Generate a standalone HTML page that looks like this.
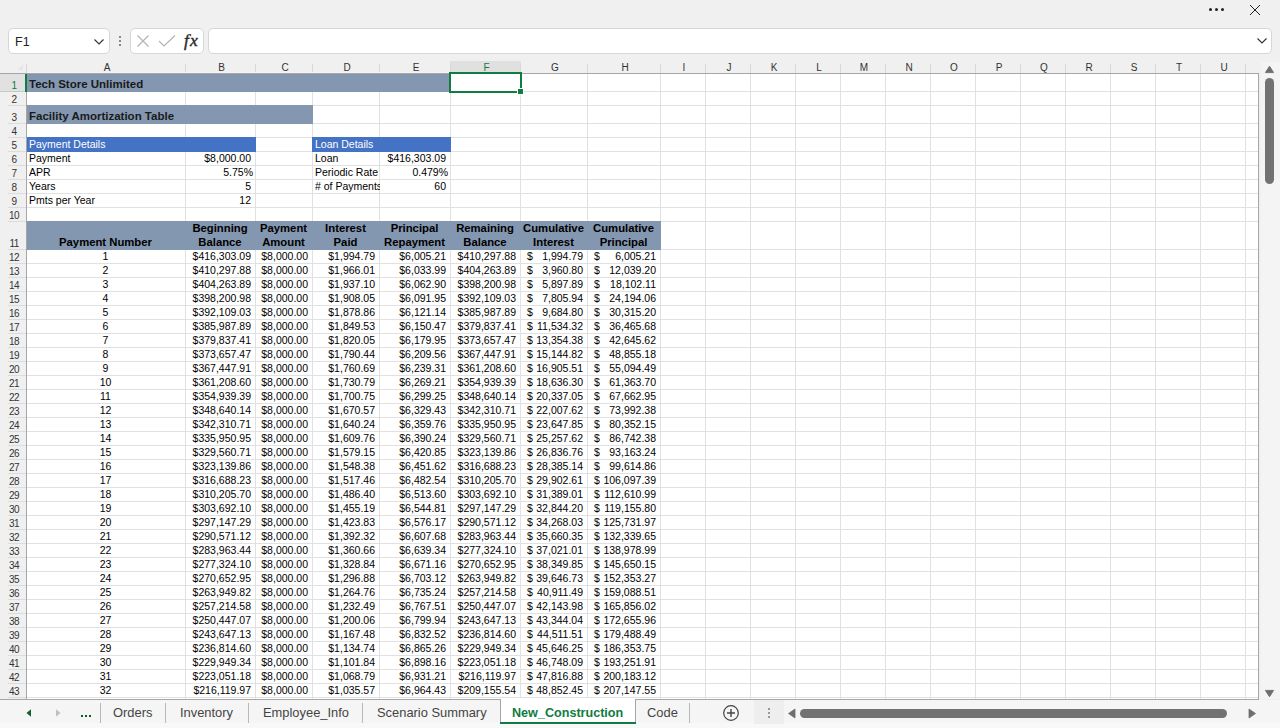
<!DOCTYPE html>
<html><head><meta charset="utf-8"><title>New_Construction</title>
<style>
html,body{margin:0;padding:0;}
body{width:1280px;height:728px;position:relative;overflow:hidden;background:#f0f0f0;font-family:'Liberation Sans', sans-serif;}
.a{position:absolute;}
.t{position:absolute;white-space:nowrap;font-size:10.5px;line-height:14px;color:#000;}
.r{text-align:right;}
.c{text-align:center;}
.b{font-weight:bold;}
.vl{position:absolute;width:1px;background:#e1e1e1;}
.hl{position:absolute;height:1px;background:#e1e1e1;}
</style></head><body>

<div class="a" style="left:1209px;top:8px;width:3px;height:3px;border-radius:50%;background:#222"></div>
<div class="a" style="left:1215px;top:8px;width:3px;height:3px;border-radius:50%;background:#222"></div>
<div class="a" style="left:1221px;top:8px;width:3px;height:3px;border-radius:50%;background:#222"></div>
<svg class="a" style="left:1248px;top:3px" width="14" height="14" viewBox="0 0 14 14"><path d="M2 2 L12 12 M12 2 L2 12" stroke="#222" stroke-width="1" fill="none"/></svg>
<div class="a" style="left:8px;top:28px;width:100px;height:24px;background:#fff;border:1px solid #d6d6d6;border-radius:5px"></div>
<div class="a" style="left:15px;top:34px;font-size:12.5px;line-height:16px;color:#222">F1</div>
<svg class="a" style="left:93px;top:38px" width="12" height="8" viewBox="0 0 12 8"><path d="M1.5 1.5 L6 6 L10.5 1.5" stroke="#333" stroke-width="1.15" fill="none"/></svg>
<div class="a" style="left:119px;top:36px;width:2px;height:2px;background:#8a8a8a"></div>
<div class="a" style="left:119px;top:40px;width:2px;height:2px;background:#8a8a8a"></div>
<div class="a" style="left:119px;top:44px;width:2px;height:2px;background:#8a8a8a"></div>
<div class="a" style="left:130px;top:28px;width:72px;height:24px;background:#fff;border:1px solid #d6d6d6;border-radius:5px"></div>
<svg class="a" style="left:136px;top:34px" width="14" height="14" viewBox="0 0 14 14"><path d="M1.5 1.5 L12.5 12.5 M12.5 1.5 L1.5 12.5" stroke="#b4b4b4" stroke-width="1.2" fill="none"/></svg>
<svg class="a" style="left:158px;top:34px" width="18" height="14" viewBox="0 0 18 14"><path d="M1 7 L6 12 L17 1.5" stroke="#b4b4b4" stroke-width="1.2" fill="none"/></svg>
<div class="a" style="left:184px;top:29.5px;font-family:'Liberation Serif',serif;font-style:italic;font-size:17.5px;line-height:20px;color:#2a2a2a;letter-spacing:1.2px;-webkit-text-stroke:0.4px #2a2a2a">fx</div>
<div class="a" style="left:208px;top:28px;width:1062px;height:24px;background:#fff;border:1px solid #d6d6d6;border-radius:5px"></div>
<svg class="a" style="left:1256px;top:37px" width="12" height="8" viewBox="0 0 12 8"><path d="M1.5 1.5 L6 6 L10.5 1.5" stroke="#333" stroke-width="1.15" fill="none"/></svg>
<div class="a" style="left:27px;top:74px;width:1231px;height:625px;background:#fff"></div>
<div class="a" style="left:450px;top:61px;width:71px;height:11px;background:#e0e0e0"></div>
<div class="a" style="left:0px;top:73px;width:26px;height:18px;background:#e1e1e1"></div>
<div class="vl" style="left:185px;top:73px;height:626px"></div>
<div class="vl" style="left:255px;top:73px;height:626px"></div>
<div class="vl" style="left:312px;top:73px;height:626px"></div>
<div class="vl" style="left:379px;top:73px;height:626px"></div>
<div class="vl" style="left:450px;top:73px;height:626px"></div>
<div class="vl" style="left:520px;top:73px;height:626px"></div>
<div class="vl" style="left:587px;top:73px;height:626px"></div>
<div class="vl" style="left:660px;top:73px;height:626px"></div>
<div class="vl" style="left:705px;top:73px;height:626px"></div>
<div class="vl" style="left:750px;top:73px;height:626px"></div>
<div class="vl" style="left:795px;top:73px;height:626px"></div>
<div class="vl" style="left:840px;top:73px;height:626px"></div>
<div class="vl" style="left:885px;top:73px;height:626px"></div>
<div class="vl" style="left:930px;top:73px;height:626px"></div>
<div class="vl" style="left:975px;top:73px;height:626px"></div>
<div class="vl" style="left:1020px;top:73px;height:626px"></div>
<div class="vl" style="left:1065px;top:73px;height:626px"></div>
<div class="vl" style="left:1110px;top:73px;height:626px"></div>
<div class="vl" style="left:1155px;top:73px;height:626px"></div>
<div class="vl" style="left:1200px;top:73px;height:626px"></div>
<div class="vl" style="left:1245px;top:73px;height:626px"></div>
<div class="hl" style="left:27px;top:91px;width:1231px"></div>
<div class="hl" style="left:27px;top:105px;width:1231px"></div>
<div class="hl" style="left:27px;top:123px;width:1231px"></div>
<div class="hl" style="left:27px;top:137px;width:1231px"></div>
<div class="hl" style="left:27px;top:151px;width:1231px"></div>
<div class="hl" style="left:27px;top:165px;width:1231px"></div>
<div class="hl" style="left:27px;top:179px;width:1231px"></div>
<div class="hl" style="left:27px;top:193px;width:1231px"></div>
<div class="hl" style="left:27px;top:207px;width:1231px"></div>
<div class="hl" style="left:27px;top:221px;width:1231px"></div>
<div class="hl" style="left:27px;top:249px;width:1231px"></div>
<div class="hl" style="left:27px;top:263px;width:1231px"></div>
<div class="hl" style="left:27px;top:277px;width:1231px"></div>
<div class="hl" style="left:27px;top:291px;width:1231px"></div>
<div class="hl" style="left:27px;top:305px;width:1231px"></div>
<div class="hl" style="left:27px;top:319px;width:1231px"></div>
<div class="hl" style="left:27px;top:333px;width:1231px"></div>
<div class="hl" style="left:27px;top:347px;width:1231px"></div>
<div class="hl" style="left:27px;top:361px;width:1231px"></div>
<div class="hl" style="left:27px;top:375px;width:1231px"></div>
<div class="hl" style="left:27px;top:389px;width:1231px"></div>
<div class="hl" style="left:27px;top:403px;width:1231px"></div>
<div class="hl" style="left:27px;top:417px;width:1231px"></div>
<div class="hl" style="left:27px;top:431px;width:1231px"></div>
<div class="hl" style="left:27px;top:445px;width:1231px"></div>
<div class="hl" style="left:27px;top:459px;width:1231px"></div>
<div class="hl" style="left:27px;top:473px;width:1231px"></div>
<div class="hl" style="left:27px;top:487px;width:1231px"></div>
<div class="hl" style="left:27px;top:501px;width:1231px"></div>
<div class="hl" style="left:27px;top:515px;width:1231px"></div>
<div class="hl" style="left:27px;top:529px;width:1231px"></div>
<div class="hl" style="left:27px;top:543px;width:1231px"></div>
<div class="hl" style="left:27px;top:557px;width:1231px"></div>
<div class="hl" style="left:27px;top:571px;width:1231px"></div>
<div class="hl" style="left:27px;top:585px;width:1231px"></div>
<div class="hl" style="left:27px;top:599px;width:1231px"></div>
<div class="hl" style="left:27px;top:613px;width:1231px"></div>
<div class="hl" style="left:27px;top:627px;width:1231px"></div>
<div class="hl" style="left:27px;top:641px;width:1231px"></div>
<div class="hl" style="left:27px;top:655px;width:1231px"></div>
<div class="hl" style="left:27px;top:669px;width:1231px"></div>
<div class="hl" style="left:27px;top:683px;width:1231px"></div>
<div class="hl" style="left:27px;top:697px;width:1231px"></div>
<div class="a" style="left:27px;top:73px;width:424px;height:19px;background:#8497b0"></div>
<div class="a" style="left:27px;top:105px;width:286px;height:19px;background:#8497b0"></div>
<div class="a" style="left:27px;top:137px;width:229px;height:15px;background:#4472c4"></div>
<div class="a" style="left:312px;top:137px;width:139px;height:15px;background:#4472c4"></div>
<div class="a" style="left:27px;top:221px;width:634px;height:29px;background:#8497b0"></div>
<div class="a" style="left:185px;top:64px;width:1px;height:9px;background:#d8d8d8"></div>
<div class="a" style="left:255px;top:64px;width:1px;height:9px;background:#d8d8d8"></div>
<div class="a" style="left:312px;top:64px;width:1px;height:9px;background:#d8d8d8"></div>
<div class="a" style="left:379px;top:64px;width:1px;height:9px;background:#d8d8d8"></div>
<div class="a" style="left:450px;top:64px;width:1px;height:9px;background:#d8d8d8"></div>
<div class="a" style="left:520px;top:64px;width:1px;height:9px;background:#d8d8d8"></div>
<div class="a" style="left:587px;top:64px;width:1px;height:9px;background:#d8d8d8"></div>
<div class="a" style="left:660px;top:64px;width:1px;height:9px;background:#d8d8d8"></div>
<div class="a" style="left:705px;top:64px;width:1px;height:9px;background:#d8d8d8"></div>
<div class="a" style="left:750px;top:64px;width:1px;height:9px;background:#d8d8d8"></div>
<div class="a" style="left:795px;top:64px;width:1px;height:9px;background:#d8d8d8"></div>
<div class="a" style="left:840px;top:64px;width:1px;height:9px;background:#d8d8d8"></div>
<div class="a" style="left:885px;top:64px;width:1px;height:9px;background:#d8d8d8"></div>
<div class="a" style="left:930px;top:64px;width:1px;height:9px;background:#d8d8d8"></div>
<div class="a" style="left:975px;top:64px;width:1px;height:9px;background:#d8d8d8"></div>
<div class="a" style="left:1020px;top:64px;width:1px;height:9px;background:#d8d8d8"></div>
<div class="a" style="left:1065px;top:64px;width:1px;height:9px;background:#d8d8d8"></div>
<div class="a" style="left:1110px;top:64px;width:1px;height:9px;background:#d8d8d8"></div>
<div class="a" style="left:1155px;top:64px;width:1px;height:9px;background:#d8d8d8"></div>
<div class="a" style="left:1200px;top:64px;width:1px;height:9px;background:#d8d8d8"></div>
<div class="a" style="left:1245px;top:64px;width:1px;height:9px;background:#d8d8d8"></div>
<div class="a" style="left:0px;top:73px;width:1258px;height:1px;background:#a6a6a6"></div>
<div class="a" style="left:27px;top:72px;width:423px;height:1px;background:#f6f6f6"></div>
<div class="a" style="left:26px;top:64px;width:1px;height:9px;background:#d8d8d8"></div>
<div class="a" style="left:26px;top:73px;width:1px;height:626px;background:#a6a6a6"></div>
<div class="a" style="left:1258px;top:73px;width:1px;height:627px;background:#a6a6a6"></div>
<div class="a" style="left:0px;top:699px;width:1259px;height:1px;background:#a6a6a6"></div>
<div class="t c" style="left:27.5px;width:159px;top:61px;font-size:10px;color:#333">A</div>
<div class="t c" style="left:186.5px;width:70px;top:61px;font-size:10px;color:#333">B</div>
<div class="t c" style="left:256.5px;width:57px;top:61px;font-size:10px;color:#333">C</div>
<div class="t c" style="left:313.5px;width:67px;top:61px;font-size:10px;color:#333">D</div>
<div class="t c" style="left:380.5px;width:71px;top:61px;font-size:10px;color:#333">E</div>
<div class="t c" style="left:451.5px;width:70px;top:61px;font-size:10px;color:#107c41">F</div>
<div class="t c" style="left:521.5px;width:67px;top:61px;font-size:10px;color:#333">G</div>
<div class="t c" style="left:588.5px;width:73px;top:61px;font-size:10px;color:#333">H</div>
<div class="t c" style="left:661.5px;width:45px;top:61px;font-size:10px;color:#333">I</div>
<div class="t c" style="left:706.5px;width:45px;top:61px;font-size:10px;color:#333">J</div>
<div class="t c" style="left:751.5px;width:45px;top:61px;font-size:10px;color:#333">K</div>
<div class="t c" style="left:796.5px;width:45px;top:61px;font-size:10px;color:#333">L</div>
<div class="t c" style="left:841.5px;width:45px;top:61px;font-size:10px;color:#333">M</div>
<div class="t c" style="left:886.5px;width:45px;top:61px;font-size:10px;color:#333">N</div>
<div class="t c" style="left:931.5px;width:45px;top:61px;font-size:10px;color:#333">O</div>
<div class="t c" style="left:976.5px;width:45px;top:61px;font-size:10px;color:#333">P</div>
<div class="t c" style="left:1021.5px;width:45px;top:61px;font-size:10px;color:#333">Q</div>
<div class="t c" style="left:1066.5px;width:45px;top:61px;font-size:10px;color:#333">R</div>
<div class="t c" style="left:1111.5px;width:45px;top:61px;font-size:10px;color:#333">S</div>
<div class="t c" style="left:1156.5px;width:45px;top:61px;font-size:10px;color:#333">T</div>
<div class="t c" style="left:1201.5px;width:45px;top:61px;font-size:10px;color:#333">U</div>
<div class="a" style="left:8px;top:91px;width:18px;height:1px;background:#dcdcdc"></div>
<div class="t c" style="left:0.5px;width:27px;top:79px;font-size:10px;letter-spacing:-0.6px;color:#107c41">1</div>
<div class="a" style="left:8px;top:105px;width:18px;height:1px;background:#dcdcdc"></div>
<div class="t c" style="left:0.5px;width:27px;top:93px;font-size:10px;letter-spacing:-0.6px;color:#333">2</div>
<div class="a" style="left:8px;top:123px;width:18px;height:1px;background:#dcdcdc"></div>
<div class="t c" style="left:0.5px;width:27px;top:111px;font-size:10px;letter-spacing:-0.6px;color:#333">3</div>
<div class="a" style="left:8px;top:137px;width:18px;height:1px;background:#dcdcdc"></div>
<div class="t c" style="left:0.5px;width:27px;top:125px;font-size:10px;letter-spacing:-0.6px;color:#333">4</div>
<div class="a" style="left:8px;top:151px;width:18px;height:1px;background:#dcdcdc"></div>
<div class="t c" style="left:0.5px;width:27px;top:139px;font-size:10px;letter-spacing:-0.6px;color:#333">5</div>
<div class="a" style="left:8px;top:165px;width:18px;height:1px;background:#dcdcdc"></div>
<div class="t c" style="left:0.5px;width:27px;top:153px;font-size:10px;letter-spacing:-0.6px;color:#333">6</div>
<div class="a" style="left:8px;top:179px;width:18px;height:1px;background:#dcdcdc"></div>
<div class="t c" style="left:0.5px;width:27px;top:167px;font-size:10px;letter-spacing:-0.6px;color:#333">7</div>
<div class="a" style="left:8px;top:193px;width:18px;height:1px;background:#dcdcdc"></div>
<div class="t c" style="left:0.5px;width:27px;top:181px;font-size:10px;letter-spacing:-0.6px;color:#333">8</div>
<div class="a" style="left:8px;top:207px;width:18px;height:1px;background:#dcdcdc"></div>
<div class="t c" style="left:0.5px;width:27px;top:195px;font-size:10px;letter-spacing:-0.6px;color:#333">9</div>
<div class="a" style="left:8px;top:221px;width:18px;height:1px;background:#dcdcdc"></div>
<div class="t c" style="left:0.5px;width:27px;top:209px;font-size:10px;letter-spacing:-0.6px;color:#333">10</div>
<div class="a" style="left:8px;top:249px;width:18px;height:1px;background:#dcdcdc"></div>
<div class="t c" style="left:0.5px;width:27px;top:237px;font-size:10px;letter-spacing:-0.6px;color:#333">11</div>
<div class="a" style="left:8px;top:263px;width:18px;height:1px;background:#dcdcdc"></div>
<div class="t c" style="left:0.5px;width:27px;top:251px;font-size:10px;letter-spacing:-0.6px;color:#333">12</div>
<div class="a" style="left:8px;top:277px;width:18px;height:1px;background:#dcdcdc"></div>
<div class="t c" style="left:0.5px;width:27px;top:265px;font-size:10px;letter-spacing:-0.6px;color:#333">13</div>
<div class="a" style="left:8px;top:291px;width:18px;height:1px;background:#dcdcdc"></div>
<div class="t c" style="left:0.5px;width:27px;top:279px;font-size:10px;letter-spacing:-0.6px;color:#333">14</div>
<div class="a" style="left:8px;top:305px;width:18px;height:1px;background:#dcdcdc"></div>
<div class="t c" style="left:0.5px;width:27px;top:293px;font-size:10px;letter-spacing:-0.6px;color:#333">15</div>
<div class="a" style="left:8px;top:319px;width:18px;height:1px;background:#dcdcdc"></div>
<div class="t c" style="left:0.5px;width:27px;top:307px;font-size:10px;letter-spacing:-0.6px;color:#333">16</div>
<div class="a" style="left:8px;top:333px;width:18px;height:1px;background:#dcdcdc"></div>
<div class="t c" style="left:0.5px;width:27px;top:321px;font-size:10px;letter-spacing:-0.6px;color:#333">17</div>
<div class="a" style="left:8px;top:347px;width:18px;height:1px;background:#dcdcdc"></div>
<div class="t c" style="left:0.5px;width:27px;top:335px;font-size:10px;letter-spacing:-0.6px;color:#333">18</div>
<div class="a" style="left:8px;top:361px;width:18px;height:1px;background:#dcdcdc"></div>
<div class="t c" style="left:0.5px;width:27px;top:349px;font-size:10px;letter-spacing:-0.6px;color:#333">19</div>
<div class="a" style="left:8px;top:375px;width:18px;height:1px;background:#dcdcdc"></div>
<div class="t c" style="left:0.5px;width:27px;top:363px;font-size:10px;letter-spacing:-0.6px;color:#333">20</div>
<div class="a" style="left:8px;top:389px;width:18px;height:1px;background:#dcdcdc"></div>
<div class="t c" style="left:0.5px;width:27px;top:377px;font-size:10px;letter-spacing:-0.6px;color:#333">21</div>
<div class="a" style="left:8px;top:403px;width:18px;height:1px;background:#dcdcdc"></div>
<div class="t c" style="left:0.5px;width:27px;top:391px;font-size:10px;letter-spacing:-0.6px;color:#333">22</div>
<div class="a" style="left:8px;top:417px;width:18px;height:1px;background:#dcdcdc"></div>
<div class="t c" style="left:0.5px;width:27px;top:405px;font-size:10px;letter-spacing:-0.6px;color:#333">23</div>
<div class="a" style="left:8px;top:431px;width:18px;height:1px;background:#dcdcdc"></div>
<div class="t c" style="left:0.5px;width:27px;top:419px;font-size:10px;letter-spacing:-0.6px;color:#333">24</div>
<div class="a" style="left:8px;top:445px;width:18px;height:1px;background:#dcdcdc"></div>
<div class="t c" style="left:0.5px;width:27px;top:433px;font-size:10px;letter-spacing:-0.6px;color:#333">25</div>
<div class="a" style="left:8px;top:459px;width:18px;height:1px;background:#dcdcdc"></div>
<div class="t c" style="left:0.5px;width:27px;top:447px;font-size:10px;letter-spacing:-0.6px;color:#333">26</div>
<div class="a" style="left:8px;top:473px;width:18px;height:1px;background:#dcdcdc"></div>
<div class="t c" style="left:0.5px;width:27px;top:461px;font-size:10px;letter-spacing:-0.6px;color:#333">27</div>
<div class="a" style="left:8px;top:487px;width:18px;height:1px;background:#dcdcdc"></div>
<div class="t c" style="left:0.5px;width:27px;top:475px;font-size:10px;letter-spacing:-0.6px;color:#333">28</div>
<div class="a" style="left:8px;top:501px;width:18px;height:1px;background:#dcdcdc"></div>
<div class="t c" style="left:0.5px;width:27px;top:489px;font-size:10px;letter-spacing:-0.6px;color:#333">29</div>
<div class="a" style="left:8px;top:515px;width:18px;height:1px;background:#dcdcdc"></div>
<div class="t c" style="left:0.5px;width:27px;top:503px;font-size:10px;letter-spacing:-0.6px;color:#333">30</div>
<div class="a" style="left:8px;top:529px;width:18px;height:1px;background:#dcdcdc"></div>
<div class="t c" style="left:0.5px;width:27px;top:517px;font-size:10px;letter-spacing:-0.6px;color:#333">31</div>
<div class="a" style="left:8px;top:543px;width:18px;height:1px;background:#dcdcdc"></div>
<div class="t c" style="left:0.5px;width:27px;top:531px;font-size:10px;letter-spacing:-0.6px;color:#333">32</div>
<div class="a" style="left:8px;top:557px;width:18px;height:1px;background:#dcdcdc"></div>
<div class="t c" style="left:0.5px;width:27px;top:545px;font-size:10px;letter-spacing:-0.6px;color:#333">33</div>
<div class="a" style="left:8px;top:571px;width:18px;height:1px;background:#dcdcdc"></div>
<div class="t c" style="left:0.5px;width:27px;top:559px;font-size:10px;letter-spacing:-0.6px;color:#333">34</div>
<div class="a" style="left:8px;top:585px;width:18px;height:1px;background:#dcdcdc"></div>
<div class="t c" style="left:0.5px;width:27px;top:573px;font-size:10px;letter-spacing:-0.6px;color:#333">35</div>
<div class="a" style="left:8px;top:599px;width:18px;height:1px;background:#dcdcdc"></div>
<div class="t c" style="left:0.5px;width:27px;top:587px;font-size:10px;letter-spacing:-0.6px;color:#333">36</div>
<div class="a" style="left:8px;top:613px;width:18px;height:1px;background:#dcdcdc"></div>
<div class="t c" style="left:0.5px;width:27px;top:601px;font-size:10px;letter-spacing:-0.6px;color:#333">37</div>
<div class="a" style="left:8px;top:627px;width:18px;height:1px;background:#dcdcdc"></div>
<div class="t c" style="left:0.5px;width:27px;top:615px;font-size:10px;letter-spacing:-0.6px;color:#333">38</div>
<div class="a" style="left:8px;top:641px;width:18px;height:1px;background:#dcdcdc"></div>
<div class="t c" style="left:0.5px;width:27px;top:629px;font-size:10px;letter-spacing:-0.6px;color:#333">39</div>
<div class="a" style="left:8px;top:655px;width:18px;height:1px;background:#dcdcdc"></div>
<div class="t c" style="left:0.5px;width:27px;top:643px;font-size:10px;letter-spacing:-0.6px;color:#333">40</div>
<div class="a" style="left:8px;top:669px;width:18px;height:1px;background:#dcdcdc"></div>
<div class="t c" style="left:0.5px;width:27px;top:657px;font-size:10px;letter-spacing:-0.6px;color:#333">41</div>
<div class="a" style="left:8px;top:683px;width:18px;height:1px;background:#dcdcdc"></div>
<div class="t c" style="left:0.5px;width:27px;top:671px;font-size:10px;letter-spacing:-0.6px;color:#333">42</div>
<div class="a" style="left:8px;top:697px;width:18px;height:1px;background:#dcdcdc"></div>
<div class="t c" style="left:0.5px;width:27px;top:685px;font-size:10px;letter-spacing:-0.6px;color:#333">43</div>
<div class="a" style="left:0px;top:91px;width:26px;height:1px;background:#c8c8c8"></div>
<div class="a" style="left:25px;top:74px;width:2px;height:18px;background:#107c41"></div>
<svg class="a" style="left:16px;top:63px" width="8" height="8" viewBox="0 0 8 8"><path d="M7 1 L7 7 L1 7 Z" fill="#e6e6e6"/></svg>
<div class="t b" style="top:77px;color:#1a1a1a;font-size:11.5px;left:29px;">Tech Store Unlimited</div>
<div class="t b" style="top:109px;color:#1a1a1a;font-size:11.5px;left:29px;">Facility Amortization Table</div>
<div class="t" style="top:137px;color:#fff;left:29px;">Payment Details</div>
<div class="t" style="top:137px;color:#fff;left:315px;">Loan Details</div>
<div class="t" style="top:151px;color:#000;left:29px;">Payment</div>
<div class="t" style="top:151px;color:#000;left:185px;width:66px;text-align:right;">$8,000.00</div>
<div class="t" style="top:165px;color:#000;left:29px;">APR</div>
<div class="t" style="top:165px;color:#000;left:185px;width:68px;text-align:right;">5.75%</div>
<div class="t" style="top:179px;color:#000;left:29px;">Years</div>
<div class="t" style="top:179px;color:#000;left:185px;width:66px;text-align:right;">5</div>
<div class="t" style="top:193px;color:#000;left:29px;">Pmts per Year</div>
<div class="t" style="top:193px;color:#000;left:185px;width:66px;text-align:right;">12</div>
<div class="t" style="top:151px;color:#000;left:315px;"><span style="display:inline-block;width:65px;overflow:hidden">Loan</span></div>
<div class="t" style="top:151px;color:#000;left:379px;width:67px;text-align:right;">$416,303.09</div>
<div class="t" style="top:165px;color:#000;left:315px;"><span style="display:inline-block;width:65px;overflow:hidden">Periodic Rate</span></div>
<div class="t" style="top:165px;color:#000;left:379px;width:69px;text-align:right;">0.479%</div>
<div class="t" style="top:179px;color:#000;left:315px;"><span style="display:inline-block;width:65px;overflow:hidden"># of Payments</span></div>
<div class="t" style="top:179px;color:#000;left:379px;width:67px;text-align:right;">60</div>
<div class="t c b" style="left:26px;width:159px;top:235px;font-size:11.3px">Payment Number</div>
<div class="t c b" style="left:185px;width:70px;top:221px;font-size:11.3px">Beginning</div>
<div class="t c b" style="left:185px;width:70px;top:235px;font-size:11.3px">Balance</div>
<div class="t c b" style="left:255px;width:57px;top:221px;font-size:11.3px">Payment</div>
<div class="t c b" style="left:255px;width:57px;top:235px;font-size:11.3px">Amount</div>
<div class="t c b" style="left:312px;width:67px;top:221px;font-size:11.3px">Interest</div>
<div class="t c b" style="left:312px;width:67px;top:235px;font-size:11.3px">Paid</div>
<div class="t c b" style="left:379px;width:71px;top:221px;font-size:11.3px">Principal</div>
<div class="t c b" style="left:379px;width:71px;top:235px;font-size:11.3px">Repayment</div>
<div class="t c b" style="left:450px;width:70px;top:221px;font-size:11.3px">Remaining</div>
<div class="t c b" style="left:450px;width:70px;top:235px;font-size:11.3px">Balance</div>
<div class="t c b" style="left:520px;width:67px;top:221px;font-size:11.3px">Cumulative</div>
<div class="t c b" style="left:520px;width:67px;top:235px;font-size:11.3px">Interest</div>
<div class="t c b" style="left:587px;width:73px;top:221px;font-size:11.3px">Cumulative</div>
<div class="t c b" style="left:587px;width:73px;top:235px;font-size:11.3px">Principal</div>
<div class="t" style="top:249px;color:#000;left:26px;width:159px;text-align:center;">1</div>
<div class="t" style="top:249px;color:#000;left:185px;width:66px;text-align:right;">$416,303.09</div>
<div class="t" style="top:249px;color:#000;left:255px;width:53px;text-align:right;">$8,000.00</div>
<div class="t" style="top:249px;color:#000;left:312px;width:63px;text-align:right;">$1,994.79</div>
<div class="t" style="top:249px;color:#000;left:379px;width:67px;text-align:right;">$6,005.21</div>
<div class="t" style="top:249px;color:#000;left:450px;width:66px;text-align:right;">$410,297.88</div>
<div class="t" style="top:249px;color:#000;left:527px;">$</div>
<div class="t" style="top:249px;color:#000;left:520px;width:63px;text-align:right;">1,994.79</div>
<div class="t" style="top:249px;color:#000;left:594px;">$</div>
<div class="t" style="top:249px;color:#000;left:587px;width:69px;text-align:right;">6,005.21</div>
<div class="t" style="top:263px;color:#000;left:26px;width:159px;text-align:center;">2</div>
<div class="t" style="top:263px;color:#000;left:185px;width:66px;text-align:right;">$410,297.88</div>
<div class="t" style="top:263px;color:#000;left:255px;width:53px;text-align:right;">$8,000.00</div>
<div class="t" style="top:263px;color:#000;left:312px;width:63px;text-align:right;">$1,966.01</div>
<div class="t" style="top:263px;color:#000;left:379px;width:67px;text-align:right;">$6,033.99</div>
<div class="t" style="top:263px;color:#000;left:450px;width:66px;text-align:right;">$404,263.89</div>
<div class="t" style="top:263px;color:#000;left:527px;">$</div>
<div class="t" style="top:263px;color:#000;left:520px;width:63px;text-align:right;">3,960.80</div>
<div class="t" style="top:263px;color:#000;left:594px;">$</div>
<div class="t" style="top:263px;color:#000;left:587px;width:69px;text-align:right;">12,039.20</div>
<div class="t" style="top:277px;color:#000;left:26px;width:159px;text-align:center;">3</div>
<div class="t" style="top:277px;color:#000;left:185px;width:66px;text-align:right;">$404,263.89</div>
<div class="t" style="top:277px;color:#000;left:255px;width:53px;text-align:right;">$8,000.00</div>
<div class="t" style="top:277px;color:#000;left:312px;width:63px;text-align:right;">$1,937.10</div>
<div class="t" style="top:277px;color:#000;left:379px;width:67px;text-align:right;">$6,062.90</div>
<div class="t" style="top:277px;color:#000;left:450px;width:66px;text-align:right;">$398,200.98</div>
<div class="t" style="top:277px;color:#000;left:527px;">$</div>
<div class="t" style="top:277px;color:#000;left:520px;width:63px;text-align:right;">5,897.89</div>
<div class="t" style="top:277px;color:#000;left:594px;">$</div>
<div class="t" style="top:277px;color:#000;left:587px;width:69px;text-align:right;">18,102.11</div>
<div class="t" style="top:291px;color:#000;left:26px;width:159px;text-align:center;">4</div>
<div class="t" style="top:291px;color:#000;left:185px;width:66px;text-align:right;">$398,200.98</div>
<div class="t" style="top:291px;color:#000;left:255px;width:53px;text-align:right;">$8,000.00</div>
<div class="t" style="top:291px;color:#000;left:312px;width:63px;text-align:right;">$1,908.05</div>
<div class="t" style="top:291px;color:#000;left:379px;width:67px;text-align:right;">$6,091.95</div>
<div class="t" style="top:291px;color:#000;left:450px;width:66px;text-align:right;">$392,109.03</div>
<div class="t" style="top:291px;color:#000;left:527px;">$</div>
<div class="t" style="top:291px;color:#000;left:520px;width:63px;text-align:right;">7,805.94</div>
<div class="t" style="top:291px;color:#000;left:594px;">$</div>
<div class="t" style="top:291px;color:#000;left:587px;width:69px;text-align:right;">24,194.06</div>
<div class="t" style="top:305px;color:#000;left:26px;width:159px;text-align:center;">5</div>
<div class="t" style="top:305px;color:#000;left:185px;width:66px;text-align:right;">$392,109.03</div>
<div class="t" style="top:305px;color:#000;left:255px;width:53px;text-align:right;">$8,000.00</div>
<div class="t" style="top:305px;color:#000;left:312px;width:63px;text-align:right;">$1,878.86</div>
<div class="t" style="top:305px;color:#000;left:379px;width:67px;text-align:right;">$6,121.14</div>
<div class="t" style="top:305px;color:#000;left:450px;width:66px;text-align:right;">$385,987.89</div>
<div class="t" style="top:305px;color:#000;left:527px;">$</div>
<div class="t" style="top:305px;color:#000;left:520px;width:63px;text-align:right;">9,684.80</div>
<div class="t" style="top:305px;color:#000;left:594px;">$</div>
<div class="t" style="top:305px;color:#000;left:587px;width:69px;text-align:right;">30,315.20</div>
<div class="t" style="top:319px;color:#000;left:26px;width:159px;text-align:center;">6</div>
<div class="t" style="top:319px;color:#000;left:185px;width:66px;text-align:right;">$385,987.89</div>
<div class="t" style="top:319px;color:#000;left:255px;width:53px;text-align:right;">$8,000.00</div>
<div class="t" style="top:319px;color:#000;left:312px;width:63px;text-align:right;">$1,849.53</div>
<div class="t" style="top:319px;color:#000;left:379px;width:67px;text-align:right;">$6,150.47</div>
<div class="t" style="top:319px;color:#000;left:450px;width:66px;text-align:right;">$379,837.41</div>
<div class="t" style="top:319px;color:#000;left:527px;">$</div>
<div class="t" style="top:319px;color:#000;left:520px;width:63px;text-align:right;">11,534.32</div>
<div class="t" style="top:319px;color:#000;left:594px;">$</div>
<div class="t" style="top:319px;color:#000;left:587px;width:69px;text-align:right;">36,465.68</div>
<div class="t" style="top:333px;color:#000;left:26px;width:159px;text-align:center;">7</div>
<div class="t" style="top:333px;color:#000;left:185px;width:66px;text-align:right;">$379,837.41</div>
<div class="t" style="top:333px;color:#000;left:255px;width:53px;text-align:right;">$8,000.00</div>
<div class="t" style="top:333px;color:#000;left:312px;width:63px;text-align:right;">$1,820.05</div>
<div class="t" style="top:333px;color:#000;left:379px;width:67px;text-align:right;">$6,179.95</div>
<div class="t" style="top:333px;color:#000;left:450px;width:66px;text-align:right;">$373,657.47</div>
<div class="t" style="top:333px;color:#000;left:527px;">$</div>
<div class="t" style="top:333px;color:#000;left:520px;width:63px;text-align:right;">13,354.38</div>
<div class="t" style="top:333px;color:#000;left:594px;">$</div>
<div class="t" style="top:333px;color:#000;left:587px;width:69px;text-align:right;">42,645.62</div>
<div class="t" style="top:347px;color:#000;left:26px;width:159px;text-align:center;">8</div>
<div class="t" style="top:347px;color:#000;left:185px;width:66px;text-align:right;">$373,657.47</div>
<div class="t" style="top:347px;color:#000;left:255px;width:53px;text-align:right;">$8,000.00</div>
<div class="t" style="top:347px;color:#000;left:312px;width:63px;text-align:right;">$1,790.44</div>
<div class="t" style="top:347px;color:#000;left:379px;width:67px;text-align:right;">$6,209.56</div>
<div class="t" style="top:347px;color:#000;left:450px;width:66px;text-align:right;">$367,447.91</div>
<div class="t" style="top:347px;color:#000;left:527px;">$</div>
<div class="t" style="top:347px;color:#000;left:520px;width:63px;text-align:right;">15,144.82</div>
<div class="t" style="top:347px;color:#000;left:594px;">$</div>
<div class="t" style="top:347px;color:#000;left:587px;width:69px;text-align:right;">48,855.18</div>
<div class="t" style="top:361px;color:#000;left:26px;width:159px;text-align:center;">9</div>
<div class="t" style="top:361px;color:#000;left:185px;width:66px;text-align:right;">$367,447.91</div>
<div class="t" style="top:361px;color:#000;left:255px;width:53px;text-align:right;">$8,000.00</div>
<div class="t" style="top:361px;color:#000;left:312px;width:63px;text-align:right;">$1,760.69</div>
<div class="t" style="top:361px;color:#000;left:379px;width:67px;text-align:right;">$6,239.31</div>
<div class="t" style="top:361px;color:#000;left:450px;width:66px;text-align:right;">$361,208.60</div>
<div class="t" style="top:361px;color:#000;left:527px;">$</div>
<div class="t" style="top:361px;color:#000;left:520px;width:63px;text-align:right;">16,905.51</div>
<div class="t" style="top:361px;color:#000;left:594px;">$</div>
<div class="t" style="top:361px;color:#000;left:587px;width:69px;text-align:right;">55,094.49</div>
<div class="t" style="top:375px;color:#000;left:26px;width:159px;text-align:center;">10</div>
<div class="t" style="top:375px;color:#000;left:185px;width:66px;text-align:right;">$361,208.60</div>
<div class="t" style="top:375px;color:#000;left:255px;width:53px;text-align:right;">$8,000.00</div>
<div class="t" style="top:375px;color:#000;left:312px;width:63px;text-align:right;">$1,730.79</div>
<div class="t" style="top:375px;color:#000;left:379px;width:67px;text-align:right;">$6,269.21</div>
<div class="t" style="top:375px;color:#000;left:450px;width:66px;text-align:right;">$354,939.39</div>
<div class="t" style="top:375px;color:#000;left:527px;">$</div>
<div class="t" style="top:375px;color:#000;left:520px;width:63px;text-align:right;">18,636.30</div>
<div class="t" style="top:375px;color:#000;left:594px;">$</div>
<div class="t" style="top:375px;color:#000;left:587px;width:69px;text-align:right;">61,363.70</div>
<div class="t" style="top:389px;color:#000;left:26px;width:159px;text-align:center;">11</div>
<div class="t" style="top:389px;color:#000;left:185px;width:66px;text-align:right;">$354,939.39</div>
<div class="t" style="top:389px;color:#000;left:255px;width:53px;text-align:right;">$8,000.00</div>
<div class="t" style="top:389px;color:#000;left:312px;width:63px;text-align:right;">$1,700.75</div>
<div class="t" style="top:389px;color:#000;left:379px;width:67px;text-align:right;">$6,299.25</div>
<div class="t" style="top:389px;color:#000;left:450px;width:66px;text-align:right;">$348,640.14</div>
<div class="t" style="top:389px;color:#000;left:527px;">$</div>
<div class="t" style="top:389px;color:#000;left:520px;width:63px;text-align:right;">20,337.05</div>
<div class="t" style="top:389px;color:#000;left:594px;">$</div>
<div class="t" style="top:389px;color:#000;left:587px;width:69px;text-align:right;">67,662.95</div>
<div class="t" style="top:403px;color:#000;left:26px;width:159px;text-align:center;">12</div>
<div class="t" style="top:403px;color:#000;left:185px;width:66px;text-align:right;">$348,640.14</div>
<div class="t" style="top:403px;color:#000;left:255px;width:53px;text-align:right;">$8,000.00</div>
<div class="t" style="top:403px;color:#000;left:312px;width:63px;text-align:right;">$1,670.57</div>
<div class="t" style="top:403px;color:#000;left:379px;width:67px;text-align:right;">$6,329.43</div>
<div class="t" style="top:403px;color:#000;left:450px;width:66px;text-align:right;">$342,310.71</div>
<div class="t" style="top:403px;color:#000;left:527px;">$</div>
<div class="t" style="top:403px;color:#000;left:520px;width:63px;text-align:right;">22,007.62</div>
<div class="t" style="top:403px;color:#000;left:594px;">$</div>
<div class="t" style="top:403px;color:#000;left:587px;width:69px;text-align:right;">73,992.38</div>
<div class="t" style="top:417px;color:#000;left:26px;width:159px;text-align:center;">13</div>
<div class="t" style="top:417px;color:#000;left:185px;width:66px;text-align:right;">$342,310.71</div>
<div class="t" style="top:417px;color:#000;left:255px;width:53px;text-align:right;">$8,000.00</div>
<div class="t" style="top:417px;color:#000;left:312px;width:63px;text-align:right;">$1,640.24</div>
<div class="t" style="top:417px;color:#000;left:379px;width:67px;text-align:right;">$6,359.76</div>
<div class="t" style="top:417px;color:#000;left:450px;width:66px;text-align:right;">$335,950.95</div>
<div class="t" style="top:417px;color:#000;left:527px;">$</div>
<div class="t" style="top:417px;color:#000;left:520px;width:63px;text-align:right;">23,647.85</div>
<div class="t" style="top:417px;color:#000;left:594px;">$</div>
<div class="t" style="top:417px;color:#000;left:587px;width:69px;text-align:right;">80,352.15</div>
<div class="t" style="top:431px;color:#000;left:26px;width:159px;text-align:center;">14</div>
<div class="t" style="top:431px;color:#000;left:185px;width:66px;text-align:right;">$335,950.95</div>
<div class="t" style="top:431px;color:#000;left:255px;width:53px;text-align:right;">$8,000.00</div>
<div class="t" style="top:431px;color:#000;left:312px;width:63px;text-align:right;">$1,609.76</div>
<div class="t" style="top:431px;color:#000;left:379px;width:67px;text-align:right;">$6,390.24</div>
<div class="t" style="top:431px;color:#000;left:450px;width:66px;text-align:right;">$329,560.71</div>
<div class="t" style="top:431px;color:#000;left:527px;">$</div>
<div class="t" style="top:431px;color:#000;left:520px;width:63px;text-align:right;">25,257.62</div>
<div class="t" style="top:431px;color:#000;left:594px;">$</div>
<div class="t" style="top:431px;color:#000;left:587px;width:69px;text-align:right;">86,742.38</div>
<div class="t" style="top:445px;color:#000;left:26px;width:159px;text-align:center;">15</div>
<div class="t" style="top:445px;color:#000;left:185px;width:66px;text-align:right;">$329,560.71</div>
<div class="t" style="top:445px;color:#000;left:255px;width:53px;text-align:right;">$8,000.00</div>
<div class="t" style="top:445px;color:#000;left:312px;width:63px;text-align:right;">$1,579.15</div>
<div class="t" style="top:445px;color:#000;left:379px;width:67px;text-align:right;">$6,420.85</div>
<div class="t" style="top:445px;color:#000;left:450px;width:66px;text-align:right;">$323,139.86</div>
<div class="t" style="top:445px;color:#000;left:527px;">$</div>
<div class="t" style="top:445px;color:#000;left:520px;width:63px;text-align:right;">26,836.76</div>
<div class="t" style="top:445px;color:#000;left:594px;">$</div>
<div class="t" style="top:445px;color:#000;left:587px;width:69px;text-align:right;">93,163.24</div>
<div class="t" style="top:459px;color:#000;left:26px;width:159px;text-align:center;">16</div>
<div class="t" style="top:459px;color:#000;left:185px;width:66px;text-align:right;">$323,139.86</div>
<div class="t" style="top:459px;color:#000;left:255px;width:53px;text-align:right;">$8,000.00</div>
<div class="t" style="top:459px;color:#000;left:312px;width:63px;text-align:right;">$1,548.38</div>
<div class="t" style="top:459px;color:#000;left:379px;width:67px;text-align:right;">$6,451.62</div>
<div class="t" style="top:459px;color:#000;left:450px;width:66px;text-align:right;">$316,688.23</div>
<div class="t" style="top:459px;color:#000;left:527px;">$</div>
<div class="t" style="top:459px;color:#000;left:520px;width:63px;text-align:right;">28,385.14</div>
<div class="t" style="top:459px;color:#000;left:594px;">$</div>
<div class="t" style="top:459px;color:#000;left:587px;width:69px;text-align:right;">99,614.86</div>
<div class="t" style="top:473px;color:#000;left:26px;width:159px;text-align:center;">17</div>
<div class="t" style="top:473px;color:#000;left:185px;width:66px;text-align:right;">$316,688.23</div>
<div class="t" style="top:473px;color:#000;left:255px;width:53px;text-align:right;">$8,000.00</div>
<div class="t" style="top:473px;color:#000;left:312px;width:63px;text-align:right;">$1,517.46</div>
<div class="t" style="top:473px;color:#000;left:379px;width:67px;text-align:right;">$6,482.54</div>
<div class="t" style="top:473px;color:#000;left:450px;width:66px;text-align:right;">$310,205.70</div>
<div class="t" style="top:473px;color:#000;left:527px;">$</div>
<div class="t" style="top:473px;color:#000;left:520px;width:63px;text-align:right;">29,902.61</div>
<div class="t" style="top:473px;color:#000;left:594px;">$</div>
<div class="t" style="top:473px;color:#000;left:587px;width:69px;text-align:right;">106,097.39</div>
<div class="t" style="top:487px;color:#000;left:26px;width:159px;text-align:center;">18</div>
<div class="t" style="top:487px;color:#000;left:185px;width:66px;text-align:right;">$310,205.70</div>
<div class="t" style="top:487px;color:#000;left:255px;width:53px;text-align:right;">$8,000.00</div>
<div class="t" style="top:487px;color:#000;left:312px;width:63px;text-align:right;">$1,486.40</div>
<div class="t" style="top:487px;color:#000;left:379px;width:67px;text-align:right;">$6,513.60</div>
<div class="t" style="top:487px;color:#000;left:450px;width:66px;text-align:right;">$303,692.10</div>
<div class="t" style="top:487px;color:#000;left:527px;">$</div>
<div class="t" style="top:487px;color:#000;left:520px;width:63px;text-align:right;">31,389.01</div>
<div class="t" style="top:487px;color:#000;left:594px;">$</div>
<div class="t" style="top:487px;color:#000;left:587px;width:69px;text-align:right;">112,610.99</div>
<div class="t" style="top:501px;color:#000;left:26px;width:159px;text-align:center;">19</div>
<div class="t" style="top:501px;color:#000;left:185px;width:66px;text-align:right;">$303,692.10</div>
<div class="t" style="top:501px;color:#000;left:255px;width:53px;text-align:right;">$8,000.00</div>
<div class="t" style="top:501px;color:#000;left:312px;width:63px;text-align:right;">$1,455.19</div>
<div class="t" style="top:501px;color:#000;left:379px;width:67px;text-align:right;">$6,544.81</div>
<div class="t" style="top:501px;color:#000;left:450px;width:66px;text-align:right;">$297,147.29</div>
<div class="t" style="top:501px;color:#000;left:527px;">$</div>
<div class="t" style="top:501px;color:#000;left:520px;width:63px;text-align:right;">32,844.20</div>
<div class="t" style="top:501px;color:#000;left:594px;">$</div>
<div class="t" style="top:501px;color:#000;left:587px;width:69px;text-align:right;">119,155.80</div>
<div class="t" style="top:515px;color:#000;left:26px;width:159px;text-align:center;">20</div>
<div class="t" style="top:515px;color:#000;left:185px;width:66px;text-align:right;">$297,147.29</div>
<div class="t" style="top:515px;color:#000;left:255px;width:53px;text-align:right;">$8,000.00</div>
<div class="t" style="top:515px;color:#000;left:312px;width:63px;text-align:right;">$1,423.83</div>
<div class="t" style="top:515px;color:#000;left:379px;width:67px;text-align:right;">$6,576.17</div>
<div class="t" style="top:515px;color:#000;left:450px;width:66px;text-align:right;">$290,571.12</div>
<div class="t" style="top:515px;color:#000;left:527px;">$</div>
<div class="t" style="top:515px;color:#000;left:520px;width:63px;text-align:right;">34,268.03</div>
<div class="t" style="top:515px;color:#000;left:594px;">$</div>
<div class="t" style="top:515px;color:#000;left:587px;width:69px;text-align:right;">125,731.97</div>
<div class="t" style="top:529px;color:#000;left:26px;width:159px;text-align:center;">21</div>
<div class="t" style="top:529px;color:#000;left:185px;width:66px;text-align:right;">$290,571.12</div>
<div class="t" style="top:529px;color:#000;left:255px;width:53px;text-align:right;">$8,000.00</div>
<div class="t" style="top:529px;color:#000;left:312px;width:63px;text-align:right;">$1,392.32</div>
<div class="t" style="top:529px;color:#000;left:379px;width:67px;text-align:right;">$6,607.68</div>
<div class="t" style="top:529px;color:#000;left:450px;width:66px;text-align:right;">$283,963.44</div>
<div class="t" style="top:529px;color:#000;left:527px;">$</div>
<div class="t" style="top:529px;color:#000;left:520px;width:63px;text-align:right;">35,660.35</div>
<div class="t" style="top:529px;color:#000;left:594px;">$</div>
<div class="t" style="top:529px;color:#000;left:587px;width:69px;text-align:right;">132,339.65</div>
<div class="t" style="top:543px;color:#000;left:26px;width:159px;text-align:center;">22</div>
<div class="t" style="top:543px;color:#000;left:185px;width:66px;text-align:right;">$283,963.44</div>
<div class="t" style="top:543px;color:#000;left:255px;width:53px;text-align:right;">$8,000.00</div>
<div class="t" style="top:543px;color:#000;left:312px;width:63px;text-align:right;">$1,360.66</div>
<div class="t" style="top:543px;color:#000;left:379px;width:67px;text-align:right;">$6,639.34</div>
<div class="t" style="top:543px;color:#000;left:450px;width:66px;text-align:right;">$277,324.10</div>
<div class="t" style="top:543px;color:#000;left:527px;">$</div>
<div class="t" style="top:543px;color:#000;left:520px;width:63px;text-align:right;">37,021.01</div>
<div class="t" style="top:543px;color:#000;left:594px;">$</div>
<div class="t" style="top:543px;color:#000;left:587px;width:69px;text-align:right;">138,978.99</div>
<div class="t" style="top:557px;color:#000;left:26px;width:159px;text-align:center;">23</div>
<div class="t" style="top:557px;color:#000;left:185px;width:66px;text-align:right;">$277,324.10</div>
<div class="t" style="top:557px;color:#000;left:255px;width:53px;text-align:right;">$8,000.00</div>
<div class="t" style="top:557px;color:#000;left:312px;width:63px;text-align:right;">$1,328.84</div>
<div class="t" style="top:557px;color:#000;left:379px;width:67px;text-align:right;">$6,671.16</div>
<div class="t" style="top:557px;color:#000;left:450px;width:66px;text-align:right;">$270,652.95</div>
<div class="t" style="top:557px;color:#000;left:527px;">$</div>
<div class="t" style="top:557px;color:#000;left:520px;width:63px;text-align:right;">38,349.85</div>
<div class="t" style="top:557px;color:#000;left:594px;">$</div>
<div class="t" style="top:557px;color:#000;left:587px;width:69px;text-align:right;">145,650.15</div>
<div class="t" style="top:571px;color:#000;left:26px;width:159px;text-align:center;">24</div>
<div class="t" style="top:571px;color:#000;left:185px;width:66px;text-align:right;">$270,652.95</div>
<div class="t" style="top:571px;color:#000;left:255px;width:53px;text-align:right;">$8,000.00</div>
<div class="t" style="top:571px;color:#000;left:312px;width:63px;text-align:right;">$1,296.88</div>
<div class="t" style="top:571px;color:#000;left:379px;width:67px;text-align:right;">$6,703.12</div>
<div class="t" style="top:571px;color:#000;left:450px;width:66px;text-align:right;">$263,949.82</div>
<div class="t" style="top:571px;color:#000;left:527px;">$</div>
<div class="t" style="top:571px;color:#000;left:520px;width:63px;text-align:right;">39,646.73</div>
<div class="t" style="top:571px;color:#000;left:594px;">$</div>
<div class="t" style="top:571px;color:#000;left:587px;width:69px;text-align:right;">152,353.27</div>
<div class="t" style="top:585px;color:#000;left:26px;width:159px;text-align:center;">25</div>
<div class="t" style="top:585px;color:#000;left:185px;width:66px;text-align:right;">$263,949.82</div>
<div class="t" style="top:585px;color:#000;left:255px;width:53px;text-align:right;">$8,000.00</div>
<div class="t" style="top:585px;color:#000;left:312px;width:63px;text-align:right;">$1,264.76</div>
<div class="t" style="top:585px;color:#000;left:379px;width:67px;text-align:right;">$6,735.24</div>
<div class="t" style="top:585px;color:#000;left:450px;width:66px;text-align:right;">$257,214.58</div>
<div class="t" style="top:585px;color:#000;left:527px;">$</div>
<div class="t" style="top:585px;color:#000;left:520px;width:63px;text-align:right;">40,911.49</div>
<div class="t" style="top:585px;color:#000;left:594px;">$</div>
<div class="t" style="top:585px;color:#000;left:587px;width:69px;text-align:right;">159,088.51</div>
<div class="t" style="top:599px;color:#000;left:26px;width:159px;text-align:center;">26</div>
<div class="t" style="top:599px;color:#000;left:185px;width:66px;text-align:right;">$257,214.58</div>
<div class="t" style="top:599px;color:#000;left:255px;width:53px;text-align:right;">$8,000.00</div>
<div class="t" style="top:599px;color:#000;left:312px;width:63px;text-align:right;">$1,232.49</div>
<div class="t" style="top:599px;color:#000;left:379px;width:67px;text-align:right;">$6,767.51</div>
<div class="t" style="top:599px;color:#000;left:450px;width:66px;text-align:right;">$250,447.07</div>
<div class="t" style="top:599px;color:#000;left:527px;">$</div>
<div class="t" style="top:599px;color:#000;left:520px;width:63px;text-align:right;">42,143.98</div>
<div class="t" style="top:599px;color:#000;left:594px;">$</div>
<div class="t" style="top:599px;color:#000;left:587px;width:69px;text-align:right;">165,856.02</div>
<div class="t" style="top:613px;color:#000;left:26px;width:159px;text-align:center;">27</div>
<div class="t" style="top:613px;color:#000;left:185px;width:66px;text-align:right;">$250,447.07</div>
<div class="t" style="top:613px;color:#000;left:255px;width:53px;text-align:right;">$8,000.00</div>
<div class="t" style="top:613px;color:#000;left:312px;width:63px;text-align:right;">$1,200.06</div>
<div class="t" style="top:613px;color:#000;left:379px;width:67px;text-align:right;">$6,799.94</div>
<div class="t" style="top:613px;color:#000;left:450px;width:66px;text-align:right;">$243,647.13</div>
<div class="t" style="top:613px;color:#000;left:527px;">$</div>
<div class="t" style="top:613px;color:#000;left:520px;width:63px;text-align:right;">43,344.04</div>
<div class="t" style="top:613px;color:#000;left:594px;">$</div>
<div class="t" style="top:613px;color:#000;left:587px;width:69px;text-align:right;">172,655.96</div>
<div class="t" style="top:627px;color:#000;left:26px;width:159px;text-align:center;">28</div>
<div class="t" style="top:627px;color:#000;left:185px;width:66px;text-align:right;">$243,647.13</div>
<div class="t" style="top:627px;color:#000;left:255px;width:53px;text-align:right;">$8,000.00</div>
<div class="t" style="top:627px;color:#000;left:312px;width:63px;text-align:right;">$1,167.48</div>
<div class="t" style="top:627px;color:#000;left:379px;width:67px;text-align:right;">$6,832.52</div>
<div class="t" style="top:627px;color:#000;left:450px;width:66px;text-align:right;">$236,814.60</div>
<div class="t" style="top:627px;color:#000;left:527px;">$</div>
<div class="t" style="top:627px;color:#000;left:520px;width:63px;text-align:right;">44,511.51</div>
<div class="t" style="top:627px;color:#000;left:594px;">$</div>
<div class="t" style="top:627px;color:#000;left:587px;width:69px;text-align:right;">179,488.49</div>
<div class="t" style="top:641px;color:#000;left:26px;width:159px;text-align:center;">29</div>
<div class="t" style="top:641px;color:#000;left:185px;width:66px;text-align:right;">$236,814.60</div>
<div class="t" style="top:641px;color:#000;left:255px;width:53px;text-align:right;">$8,000.00</div>
<div class="t" style="top:641px;color:#000;left:312px;width:63px;text-align:right;">$1,134.74</div>
<div class="t" style="top:641px;color:#000;left:379px;width:67px;text-align:right;">$6,865.26</div>
<div class="t" style="top:641px;color:#000;left:450px;width:66px;text-align:right;">$229,949.34</div>
<div class="t" style="top:641px;color:#000;left:527px;">$</div>
<div class="t" style="top:641px;color:#000;left:520px;width:63px;text-align:right;">45,646.25</div>
<div class="t" style="top:641px;color:#000;left:594px;">$</div>
<div class="t" style="top:641px;color:#000;left:587px;width:69px;text-align:right;">186,353.75</div>
<div class="t" style="top:655px;color:#000;left:26px;width:159px;text-align:center;">30</div>
<div class="t" style="top:655px;color:#000;left:185px;width:66px;text-align:right;">$229,949.34</div>
<div class="t" style="top:655px;color:#000;left:255px;width:53px;text-align:right;">$8,000.00</div>
<div class="t" style="top:655px;color:#000;left:312px;width:63px;text-align:right;">$1,101.84</div>
<div class="t" style="top:655px;color:#000;left:379px;width:67px;text-align:right;">$6,898.16</div>
<div class="t" style="top:655px;color:#000;left:450px;width:66px;text-align:right;">$223,051.18</div>
<div class="t" style="top:655px;color:#000;left:527px;">$</div>
<div class="t" style="top:655px;color:#000;left:520px;width:63px;text-align:right;">46,748.09</div>
<div class="t" style="top:655px;color:#000;left:594px;">$</div>
<div class="t" style="top:655px;color:#000;left:587px;width:69px;text-align:right;">193,251.91</div>
<div class="t" style="top:669px;color:#000;left:26px;width:159px;text-align:center;">31</div>
<div class="t" style="top:669px;color:#000;left:185px;width:66px;text-align:right;">$223,051.18</div>
<div class="t" style="top:669px;color:#000;left:255px;width:53px;text-align:right;">$8,000.00</div>
<div class="t" style="top:669px;color:#000;left:312px;width:63px;text-align:right;">$1,068.79</div>
<div class="t" style="top:669px;color:#000;left:379px;width:67px;text-align:right;">$6,931.21</div>
<div class="t" style="top:669px;color:#000;left:450px;width:66px;text-align:right;">$216,119.97</div>
<div class="t" style="top:669px;color:#000;left:527px;">$</div>
<div class="t" style="top:669px;color:#000;left:520px;width:63px;text-align:right;">47,816.88</div>
<div class="t" style="top:669px;color:#000;left:594px;">$</div>
<div class="t" style="top:669px;color:#000;left:587px;width:69px;text-align:right;">200,183.12</div>
<div class="t" style="top:683px;color:#000;left:26px;width:159px;text-align:center;">32</div>
<div class="t" style="top:683px;color:#000;left:185px;width:66px;text-align:right;">$216,119.97</div>
<div class="t" style="top:683px;color:#000;left:255px;width:53px;text-align:right;">$8,000.00</div>
<div class="t" style="top:683px;color:#000;left:312px;width:63px;text-align:right;">$1,035.57</div>
<div class="t" style="top:683px;color:#000;left:379px;width:67px;text-align:right;">$6,964.43</div>
<div class="t" style="top:683px;color:#000;left:450px;width:66px;text-align:right;">$209,155.54</div>
<div class="t" style="top:683px;color:#000;left:527px;">$</div>
<div class="t" style="top:683px;color:#000;left:520px;width:63px;text-align:right;">48,852.45</div>
<div class="t" style="top:683px;color:#000;left:594px;">$</div>
<div class="t" style="top:683px;color:#000;left:587px;width:69px;text-align:right;">207,147.55</div>
<div class="a" style="left:449px;top:72px;width:69px;height:17px;border:2px solid #107c41"></div>
<div class="a" style="left:517px;top:88px;width:5px;height:5px;background:#107c41;border:1px solid #fff"></div>
<div class="a" style="left:1261px;top:62px;width:19px;height:637px;background:#f4f4f4"></div>
<svg class="a" style="left:1264px;top:65px" width="11" height="9" viewBox="0 0 11 9"><path d="M5.5 1.2 L9.6 7.6 L1.4 7.6 Z" fill="#6e6e6e" stroke="#6e6e6e" stroke-width="0.9" stroke-linejoin="round"/></svg>
<div class="a" style="left:1265px;top:78px;width:9px;height:106px;border-radius:5px;background:#727272"></div>
<svg class="a" style="left:1264px;top:689px" width="11" height="9" viewBox="0 0 11 9"><path d="M1.4 1.4 L9.6 1.4 L5.5 7.8 Z" fill="#6e6e6e" stroke="#6e6e6e" stroke-width="0.9" stroke-linejoin="round"/></svg>
<div class="a" style="left:0px;top:700px;width:1280px;height:28px;background:#f5f5f5"></div>
<div class="a" style="left:0px;top:723px;width:1280px;height:5px;background:#f8f8f8"></div>
<div class="a" style="left:754px;top:700px;width:30px;height:24px;background:#eeeeee"></div>
<svg class="a" style="left:25px;top:708px" width="8" height="10" viewBox="0 0 8 10"><path d="M6 1.3 L1.5 5 L6 8.7 Z" fill="#0e6030"/></svg>
<svg class="a" style="left:54px;top:708px" width="8" height="10" viewBox="0 0 8 10"><path d="M2 1.3 L6.5 5 L2 8.7 Z" fill="#c0c0c0"/></svg>
<div class="a" style="left:81px;top:715px;width:2px;height:2px;background:#0b5a2c"></div>
<div class="a" style="left:85px;top:715px;width:2px;height:2px;background:#0b5a2c"></div>
<div class="a" style="left:89px;top:715px;width:2px;height:2px;background:#0b5a2c"></div>
<div class="a" style="left:100px;top:703px;width:1px;height:20px;background:#b8b8b8"></div>
<div class="a" style="left:165px;top:703px;width:1px;height:20px;background:#b8b8b8"></div>
<div class="a" style="left:248px;top:703px;width:1px;height:20px;background:#b8b8b8"></div>
<div class="a" style="left:362px;top:703px;width:1px;height:20px;background:#b8b8b8"></div>
<div class="a" style="left:689px;top:703px;width:1px;height:20px;background:#b8b8b8"></div>
<div class="a" style="left:500px;top:699px;width:136px;height:23px;background:#a6a6a6"></div>
<div class="a" style="left:501px;top:698px;width:134px;height:24px;background:#fff"></div>
<div class="a" style="left:500px;top:722px;width:136px;height:2px;background:#107c41"></div>
<div class="a" style="left:113px;top:705px;font-size:12.9px;line-height:16px;font-weight:normal;color:#444;white-space:nowrap">Orders</div>
<div class="a" style="left:180px;top:705px;font-size:12.9px;line-height:16px;font-weight:normal;color:#444;white-space:nowrap">Inventory</div>
<div class="a" style="left:263px;top:705px;font-size:12.9px;line-height:16px;font-weight:normal;color:#444;white-space:nowrap">Employee_Info</div>
<div class="a" style="left:377px;top:705px;font-size:12.9px;line-height:16px;font-weight:normal;color:#444;white-space:nowrap">Scenario Summary</div>
<div class="a" style="left:512px;top:705px;font-size:12.6px;line-height:16px;font-weight:bold;color:#107c41;white-space:nowrap">New_Construction</div>
<div class="a" style="left:647px;top:705px;font-size:12.9px;line-height:16px;font-weight:normal;color:#444;white-space:nowrap">Code</div>
<svg class="a" style="left:722px;top:704px" width="18" height="18" viewBox="0 0 18 18"><circle cx="9" cy="9" r="7.3" stroke="#444" stroke-width="1.2" fill="none"/><path d="M9 5 V13 M5 9 H13" stroke="#444" stroke-width="1.4"/></svg>
<div class="a" style="left:768px;top:708px;width:2px;height:2px;background:#999"></div>
<div class="a" style="left:768px;top:712px;width:2px;height:2px;background:#999"></div>
<div class="a" style="left:768px;top:716px;width:2px;height:2px;background:#999"></div>
<svg class="a" style="left:787px;top:708px" width="9" height="11" viewBox="0 0 9 11"><path d="M8 1 L1.5 5.5 L8 10 Z" fill="#6e6e6e" stroke="#6e6e6e" stroke-width="0.8" stroke-linejoin="round"/></svg>
<div class="a" style="left:800px;top:709px;width:427px;height:9px;border-radius:5px;background:#727272"></div>
<svg class="a" style="left:1248px;top:708px" width="9" height="11" viewBox="0 0 9 11"><path d="M1 1 L7.5 5.5 L1 10 Z" fill="#6e6e6e" stroke="#6e6e6e" stroke-width="0.8" stroke-linejoin="round"/></svg>
</body></html>
